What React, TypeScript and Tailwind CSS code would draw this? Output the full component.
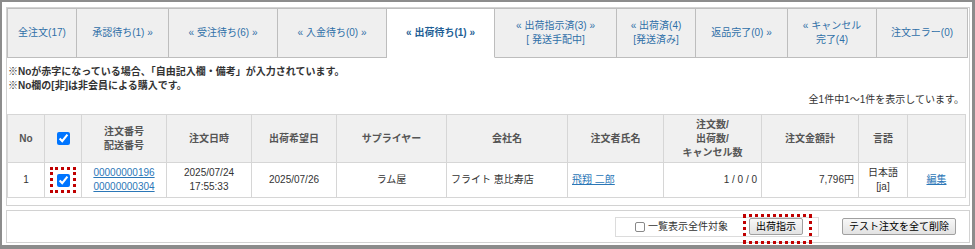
import React from "react";

const tabs = [
  { cls: "w-[70px] border-l", lines: ["全注文(17)"] },
  { cls: "w-[92px]", lines: ["承認待ち(1) »"] },
  { cls: "w-[109px]", lines: ["« 受注待ち(6) »"] },
  { cls: "w-[109px]", lines: ["« 入金待ち(0) »"] },
  { cls: "w-[108px]", lines: ["« 出荷待ち(1) »"], active: true },
  { cls: "w-[122px]", lines: ["« 出荷指示済(3) »", "[ 発送手配中]"] },
  { cls: "w-[79px]", lines: ["« 出荷済(4)", "[発送済み]"] },
  { cls: "w-[92px]", lines: ["返品完了(0) »"] },
  { cls: "w-[89px]", lines: ["« キャンセル", "完了(4)"] },
  { cls: "w-[91px]", lines: ["注文エラー(0)"] },
];

const th = "border border-[#d6d6d6] bg-[#f0f0f0] font-bold text-[#555] text-center align-middle";
const td = "border border-[#d6d6d6] align-middle";

const App = () => {
  return (
    <div className="w-[975px] h-[249px] bg-white border-l-2 border-t-2 border-r-[3px] border-b-[4px] border-[#8c8c8c] pl-[4px] pr-[2px] pt-[5px] font-['Liberation_Sans','Noto_Sans_CJK_JP',sans-serif] text-[10px] leading-[14px] text-[#333]">
      {/* main panel */}
      <div className="w-[964px] h-[199px] border border-[#d2d2d2]">
        <div className="flex">
          {tabs.map((t, i) => (
            <div
              key={i}
              className={`${t.cls} h-[50px] shrink-0 border-t border-r border-[#bdbdbd] flex flex-col items-center justify-center text-center ${
                t.active
                  ? "bg-white border-b border-b-white font-bold text-[#1f5f96]"
                  : "bg-[#efefef] border-b text-[#2f70a8]"
              }`}
            >
              {t.lines.map((l, j) => (
                <div key={j}>{l}</div>
              ))}
            </div>
          ))}
        </div>

        <div className="pt-[7px]">
          <div className="pl-[1px] font-bold">
            <div>※Noが赤字になっている場合、「自由記入欄・備考」が入力されています。</div>
            <div>※No欄の[非]は非会員による購入です。</div>
          </div>
          <div className="text-right pr-[5px]">全1件中1〜1件を表示しています。</div>

          <table className="mt-[7px] border-collapse table-fixed w-[958px]">
            <colgroup>
              <col className="w-[37px]" />
              <col className="w-[37px]" />
              <col className="w-[85px]" />
              <col className="w-[85px]" />
              <col className="w-[85px]" />
              <col className="w-[110px]" />
              <col className="w-[121px]" />
              <col className="w-[96px]" />
              <col className="w-[98px]" />
              <col className="w-[97px]" />
              <col className="w-[49px]" />
              <col className="w-[58px]" />
            </colgroup>
            <thead>
              <tr className="h-[48px]">
                <th className={th}>No</th>
                <th className={th}>
                  <input type="checkbox" defaultChecked className="w-[13px] h-[13px] align-middle m-0" />
                </th>
                <th className={th}>
                  注文番号
                  <br />
                  配送番号
                </th>
                <th className={th}>注文日時</th>
                <th className={th}>出荷希望日</th>
                <th className={th}>サプライヤー</th>
                <th className={th}>会社名</th>
                <th className={th}>注文者氏名</th>
                <th className={th}>
                  注文数/
                  <br />
                  出荷数/
                  <br />
                  キャンセル数
                </th>
                <th className={th}>注文金額計</th>
                <th className={th}>言語</th>
                <th className={th}></th>
              </tr>
            </thead>
            <tbody>
              <tr className="h-[35px]">
                <td className={`${td} text-center`}>1</td>
                <td className={`${td} text-center`}>
                  <span className="inline-flex w-[26px] h-[26px] items-center justify-center border-[3px] border-dotted border-[#c00000] align-middle">
                    <input type="checkbox" defaultChecked className="w-[13px] h-[13px] m-0" />
                  </span>
                </td>
                <td className={`${td} text-center`}>
                  <a href="#" className="text-[#2b77b7] underline">00000000196</a>
                  <br />
                  <a href="#" className="text-[#2b77b7] underline">00000000304</a>
                </td>
                <td className={`${td} text-center`}>
                  2025/07/24
                  <br />
                  17:55:33
                </td>
                <td className={`${td} text-center`}>2025/07/26</td>
                <td className={`${td} text-center`}>ラム屋</td>
                <td className={`${td} pl-[4px]`}>フライト 恵比寿店</td>
                <td className={`${td} pl-[4px]`}>
                  <a href="#" className="text-[#2b77b7] underline">飛翔 二郎</a>
                </td>
                <td className={`${td} text-right pr-[4px]`}>1 / 0 / 0</td>
                <td className={`${td} text-right pr-[4px]`}>7,796円</td>
                <td className={`${td} text-center`}>
                  日本語
                  <br />
                  [ja]
                </td>
                <td className={`${td} text-center`}>
                  <a href="#" className="text-[#2b77b7] underline">編集</a>
                </td>
              </tr>
            </tbody>
          </table>
        </div>
      </div>

      {/* footer panel */}
      <div className="mt-[4px] w-[964px] h-[33px] border border-[#d2d2d2] flex items-center justify-end pr-[13px]">
        <div className="w-[204px] h-[20px] border border-[#dcdcdc] flex items-center pl-[19px] pr-[15px]">
          <span className="w-[10px] h-[10px] border border-[#888] rounded-[2px] bg-white mr-[3px]"></span>
          <span>一覧表示全件対象</span>
          <div className="relative ml-auto">
            <button className="h-[17px] px-[6px] border border-[#a0a0a0] rounded-[2px] bg-gradient-to-b from-[#f8f8f8] to-[#e2e2e2] text-black text-[10px] leading-[14px]">
              出荷指示
            </button>
            <span className="absolute left-[-6px] right-[-9px] top-[-4px] bottom-[-9px] border-[3px] border-dotted border-[#c00000]"></span>
          </div>
        </div>
        <button className="ml-[23px] h-[17px] px-[6px] border border-[#a0a0a0] rounded-[2px] bg-gradient-to-b from-[#f8f8f8] to-[#e2e2e2] text-black text-[10px] leading-[14px]">
          テスト注文を全て削除
        </button>
      </div>
    </div>
  );
};

export default App;
